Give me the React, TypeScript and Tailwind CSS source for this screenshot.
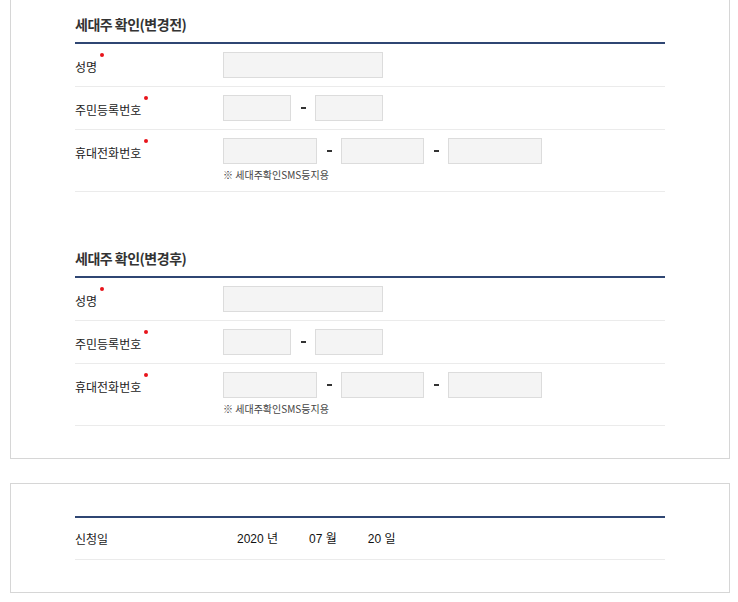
import React from 'react';

const font = { fontFamily: '"Noto Sans CJK KR", "Noto Sans", sans-serif' };

function Req() {
  return <span className="absolute right-[-7px] top-[-4px] h-[4px] w-[4px] rounded-full bg-[#e8131b]" />;
}

function Label({ text, required = true }: { text: string; required?: boolean }) {
  return (
    <div className="flex h-[26px] w-[148px] shrink-0 items-center pt-[3px]">
      <span className="relative text-[12px] leading-[20px] text-[#222]">
        {text}
        {required && <Req />}
      </span>
    </div>
  );
}

function Box({ w }: { w: string }) {
  return <input type="text" className={`h-[26px] ${w} border border-[#dcdcdc] bg-[#f4f4f4] outline-none`} />;
}

function Dash() {
  return (
    <span className="flex w-[24px] shrink-0 justify-center">
      <span className="block h-[2px] w-[5px] bg-[#333]" />
    </span>
  );
}

function Section({ title, first }: { title: string; first?: boolean }) {
  return (
    <div className={first ? '' : 'mt-[56px]'}>
      <h3 className="mb-2 text-[14px] font-bold leading-[20px] tracking-[-0.5px] text-[#333]">{title}</h3>
      <div className="border-t-2 border-[#2f4673]">
        {/* 성명 */}
        <div className="flex items-start border-b border-[#ebebeb] py-2">
          <Label text="성명" />
          <Box w="w-[160px]" />
        </div>
        {/* 주민등록번호 */}
        <div className="flex items-start border-b border-[#ebebeb] py-2">
          <Label text="주민등록번호" />
          <div className="flex items-center">
            <Box w="w-[68px]" />
            <Dash />
            <Box w="w-[68px]" />
          </div>
        </div>
        {/* 휴대전화번호 */}
        <div className="flex items-start border-b border-[#ebebeb] pt-2 pb-2">
          <Label text="휴대전화번호" />
          <div>
            <div className="flex items-center">
              <Box w="w-[94px]" />
              <Dash />
              <Box w="w-[83px]" />
              <Dash />
              <Box w="w-[94px]" />
            </div>
            <p className="mt-[3px] text-[10px] leading-[16px] text-[#444]">※ 세대주확인SMS등지용</p>
          </div>
        </div>
      </div>
    </div>
  );
}

export default function App() {
  return (
    <div className="min-h-screen bg-white pr-[8px] pl-[10px]" style={font}>
      {/* 세대주 확인 카드 */}
      <div className="border-x border-b border-[#d6d6d6] px-[64px] pt-[14px] pb-8">
        <Section title="세대주 확인(변경전)" first />
        <Section title="세대주 확인(변경후)" />
      </div>

      {/* 신청일 카드 */}
      <div className="mt-[24px] border border-[#d6d6d6] px-[64px] pt-8 pb-8">
        <div className="border-t-2 border-[#2f4673]">
          <div className="flex h-[42px] items-center border-b border-[#ebebeb]">
            <span className="w-[148px] shrink-0 text-[12px] text-[#222]">신청일</span>
            <div
              className="flex gap-[31px] pl-[14px] text-[12px] text-[#111]"
              style={{ fontFamily: '"Liberation Sans", "Noto Sans CJK KR", sans-serif' }}
            >
              <span>2020 년</span>
              <span>07 월</span>
              <span>20 일</span>
            </div>
          </div>
        </div>
      </div>
    </div>
  );
}
